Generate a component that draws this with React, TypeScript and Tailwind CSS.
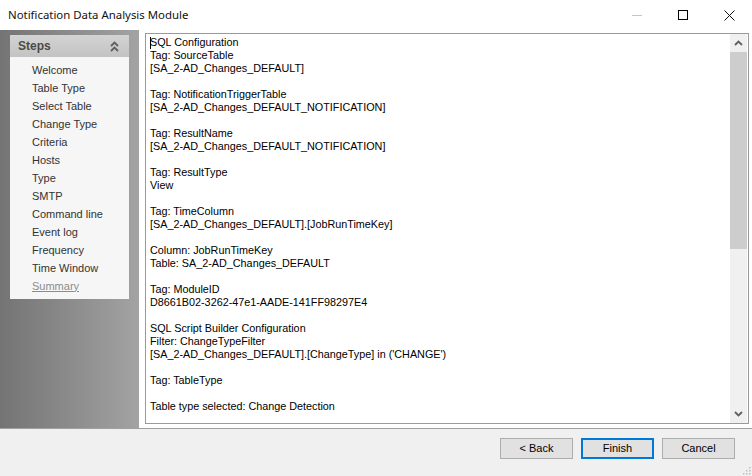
import React from "react";

const lines: string[] = [
  "SQL Configuration",
  "Tag: SourceTable",
  "[SA_2-AD_Changes_DEFAULT]",
  "",
  "Tag: NotificationTriggerTable",
  "[SA_2-AD_Changes_DEFAULT_NOTIFICATION]",
  "",
  "Tag: ResultName",
  "[SA_2-AD_Changes_DEFAULT_NOTIFICATION]",
  "",
  "Tag: ResultType",
  "View",
  "",
  "Tag: TimeColumn",
  "[SA_2-AD_Changes_DEFAULT].[JobRunTimeKey]",
  "",
  "Column: JobRunTimeKey",
  "Table: SA_2-AD_Changes_DEFAULT",
  "",
  "Tag: ModuleID",
  "D8661B02-3262-47e1-AADE-141FF98297E4",
  "",
  "SQL Script Builder Configuration",
  "Filter: ChangeTypeFilter",
  "[SA_2-AD_Changes_DEFAULT].[ChangeType] in ('CHANGE')",
  "",
  "Tag: TableType",
  "",
  "Table type selected: Change Detection",
];

const steps = [
  "Welcome",
  "Table Type",
  "Select Table",
  "Change Type",
  "Criteria",
  "Hosts",
  "Type",
  "SMTP",
  "Command line",
  "Event log",
  "Frequency",
  "Time Window",
];

function Chevron({ up }: { up: boolean }) {
  return (
    <svg width="9" height="6" viewBox="0 0 9 6">
      <path
        d={up ? "M1 5 L4.5 1.5 L8 5" : "M1 1 L4.5 4.5 L8 1"}
        stroke="#606060"
        strokeWidth="1.8"
        fill="none"
      />
    </svg>
  );
}

export default function App() {
  return (
    <div
      className="w-[752px] h-[476px] flex flex-col bg-[#f0f0f0] overflow-hidden text-black"
      style={{ fontFamily: '"Liberation Sans", Arial, sans-serif' }}
    >
      {/* Title bar */}
      <div className="h-[30px] bg-white flex items-center justify-between shrink-0">
        <span
          className="pl-[8px] text-[11.4px] text-[#111]"
          style={{ fontFamily: '"Noto Sans", "Open Sans", sans-serif' }}
        >
          Notification Data Analysis Module
        </span>
        <div className="flex items-center h-full">
          <div className="w-[46px] h-full flex items-center justify-center">
            <div className="w-[10px] h-px bg-[#c4c4c4]" />
          </div>
          <div className="w-[46px] h-full flex items-center justify-center">
            <div className="w-[10px] h-[10px] border border-black" />
          </div>
          <div className="w-[46px] h-full flex items-center justify-center">
            <svg width="11" height="11" viewBox="0 0 11 11">
              <path d="M0.5 0.5 L10.5 10.5 M10.5 0.5 L0.5 10.5" stroke="#111" strokeWidth="1" />
            </svg>
          </div>
        </div>
      </div>

      {/* Main */}
      <div className="flex h-[398px] shrink-0 bg-white">
        <div className="w-[139px] bg-gradient-to-r from-[#747474] to-[#a3a3a3] pl-[10px] pt-[5px]">
          <div className="w-[119px] h-[264px] bg-[#f6f6f6] flex flex-col">
            <div className="h-[22px] bg-gradient-to-b from-[#d3d3d3] to-[#c3c3c3] flex items-center justify-between pl-[8px] pr-[10px]">
              <span className="text-[12px] font-bold text-[#4a4a4a]">Steps</span>
              <div className="flex flex-col items-center -space-y-[1px]">
                <Chevron up />
                <Chevron up />
              </div>
            </div>
            <div className="flex flex-col pt-[4px] pl-[22px]">
              {steps.map((s) => (
                <div key={s} className="h-[18px] flex items-center text-[11px] text-[#333]">
                  {s}
                </div>
              ))}
              <div className="h-[18px] flex items-center text-[11px] text-[#8c8c8c] underline">
                Summary
              </div>
            </div>
          </div>
        </div>
        <div className="flex-1 pl-[6px] pt-[3px] pr-[3px] flex flex-col">
          <div className="h-[391px] border border-[#9a9a9a] flex bg-white">
            <div className="flex-1 pl-[4px] pt-[2px] relative">
              <div className="absolute left-[4px] top-[3px] w-px h-[12px] bg-black" />
              {lines.map((l, i) => (
                <div key={i} className="h-[13px] leading-[13px] text-[10.8px] whitespace-pre">
                  {l || " "}
                </div>
              ))}
            </div>
            <div className="w-[17px] mr-[1px] flex flex-col bg-[#f0f0f0]">
              <div className="h-[18px] flex items-center justify-center">
                <Chevron up />
              </div>
              <div className="h-[197px] bg-[#cdcdcd]" />
              <div className="flex-1" />
              <div className="h-[18px] flex items-center justify-center">
                <Chevron up={false} />
              </div>
            </div>
          </div>
        </div>
      </div>

      {/* Footer */}
      <div className="flex-1 border-t border-[#a0a0a0] relative flex justify-end items-start pt-[9px] pr-[17px] gap-[8px]">
        <button className="w-[73px] h-[21px] bg-[#e1e1e1] border border-[#adadad] text-[11px] flex items-center justify-center">
          &lt; Back
        </button>
        <button className="w-[73px] h-[21px] bg-[#e1e1e1] border-2 border-[#0078d7] text-[11px] flex items-center justify-center">
          Finish
        </button>
        <button className="w-[73px] h-[21px] bg-[#e1e1e1] border border-[#adadad] text-[11px] flex items-center justify-center">
          Cancel
        </button>
        <svg className="absolute right-[1px] bottom-[1px]" width="10" height="10" viewBox="0 0 10 10">
          {[
            [8, 2], [8, 5], [5, 5], [8, 8], [5, 8], [2, 8],
          ].map(([x, y], i) => (
            <rect key={i} x={x} y={y} width="1.5" height="1.5" fill="#bdbdbd" />
          ))}
        </svg>
      </div>
    </div>
  );
}
